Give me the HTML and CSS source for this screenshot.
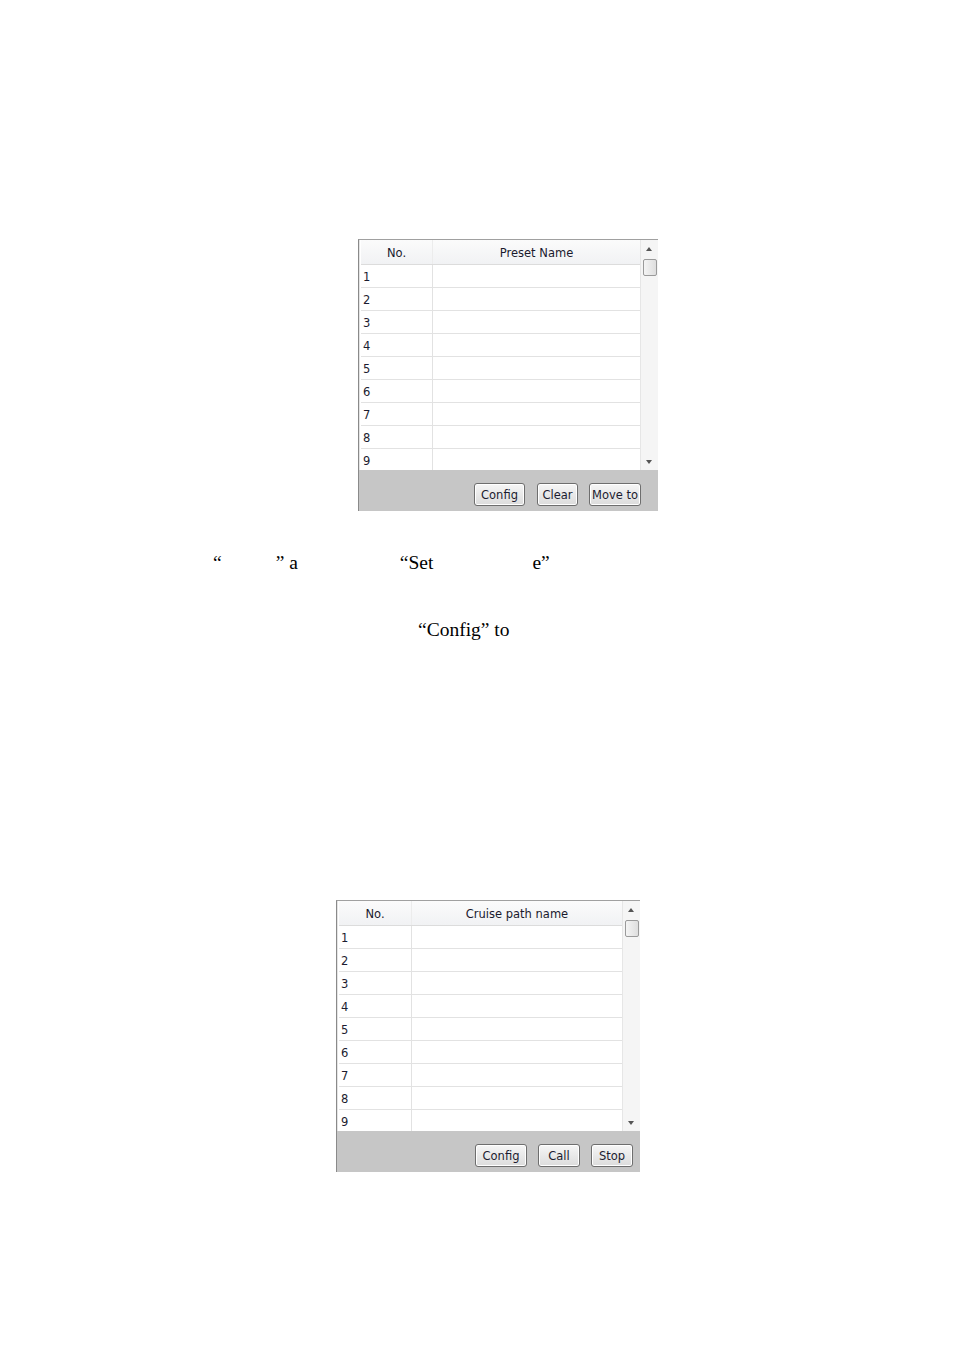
FILE: index.html
```html
<!DOCTYPE html>
<html>
<head>
<meta charset="utf-8">
<link rel="stylesheet" href="styles.css">
</head>
<body>
<div class="page">
  <div class="panel panel-a">
    <div class="list">
      <div class="table">
        <div class="row head"><div class="c1">No.</div><div class="c2">Preset Name</div></div>
        <div class="row"><div class="c1">1</div><div class="c2"></div></div>
        <div class="row"><div class="c1">2</div><div class="c2"></div></div>
        <div class="row"><div class="c1">3</div><div class="c2"></div></div>
        <div class="row"><div class="c1">4</div><div class="c2"></div></div>
        <div class="row"><div class="c1">5</div><div class="c2"></div></div>
        <div class="row"><div class="c1">6</div><div class="c2"></div></div>
        <div class="row"><div class="c1">7</div><div class="c2"></div></div>
        <div class="row"><div class="c1">8</div><div class="c2"></div></div>
        <div class="row last"><div class="c1">9</div><div class="c2"></div></div>
      </div>
      <div class="scroll">
        <div class="arrow up"></div>
        <div class="thumb"></div>
        <div class="track"></div>
        <div class="arrow down"></div>
      </div>
    </div>
    <div class="bar">
      <button class="btn b-config">Config</button>
      <button class="btn b-clear">Clear</button>
      <button class="btn b-move">Move to</button>
    </div>
  </div>

  <p class="line line1"><span class="w1">“</span><span class="w2">” a</span><span class="w3">“Set</span><span class="w4">e”</span></p>
  <p class="line line2"><span class="w5">“Config” to</span></p>

  <div class="panel panel-b">
    <div class="list">
      <div class="table">
        <div class="row head"><div class="c1">No.</div><div class="c2">Cruise path name</div></div>
        <div class="row"><div class="c1">1</div><div class="c2"></div></div>
        <div class="row"><div class="c1">2</div><div class="c2"></div></div>
        <div class="row"><div class="c1">3</div><div class="c2"></div></div>
        <div class="row"><div class="c1">4</div><div class="c2"></div></div>
        <div class="row"><div class="c1">5</div><div class="c2"></div></div>
        <div class="row"><div class="c1">6</div><div class="c2"></div></div>
        <div class="row"><div class="c1">7</div><div class="c2"></div></div>
        <div class="row"><div class="c1">8</div><div class="c2"></div></div>
        <div class="row last"><div class="c1">9</div><div class="c2"></div></div>
      </div>
      <div class="scroll">
        <div class="arrow up"></div>
        <div class="thumb"></div>
        <div class="track"></div>
        <div class="arrow down"></div>
      </div>
    </div>
    <div class="bar">
      <button class="btn b-config2">Config</button>
      <button class="btn b-call">Call</button>
      <button class="btn b-stop">Stop</button>
    </div>
  </div>
</div>
</body>
</html>
```

FILE: styles.css
```css
html, body {
  margin: 0;
  padding: 0;
  background: #ffffff;
}
.page {
  width: 954px;
  height: 1348px;
  padding-top: 239px;
  box-sizing: border-box;
  overflow: hidden;
}
.panel {
  display: flex;
  flex-direction: column;
  height: 272px;
  border-left: 1px solid #8a8a8a;
  border-top: 1px solid #a0a0a0;
  background: #ffffff;
  box-sizing: border-box;
  font-family: "DejaVu Sans", Verdana, sans-serif;
  font-size: 11.5px;
  color: #1c1c30;
}
.panel-a {
  margin-left: 358px;
  width: 300px;
}
.panel-b {
  margin-left: 336px;
  width: 304px;
  margin-top: 260px;
}
.list {
  display: flex;
  height: 230px;
  padding-left: 2px;
  box-shadow: inset 1px 0 0 #e4e4e4;
}
.table {
  flex: 1;
  display: flex;
  flex-direction: column;
  overflow: hidden;
  border-right: 1px solid #e6e6e6;
}
.row {
  display: flex;
  height: 23px;
  flex: none;
  border-bottom: 1px solid #e2e2e2;
  box-sizing: border-box;
}
.row.last {
  border-bottom: 0;
  height: 22px;
}
.row.head {
  height: 25px;
  background: linear-gradient(#fbfbfb, #f1f2f4);
  border-bottom: 1px solid #dcdcdc;
}
.row .c1 {
  width: 72px;
  flex: none;
  box-sizing: border-box;
  border-right: 1px solid #e2e2e2;
  padding-left: 2px;
  line-height: 22px;
  padding-top: 1px;
}
.panel-b .row .c1 {
  width: 73px;
}
.row .c2 {
  flex: 1;
}
.row.head .c1,
.row.head .c2 {
  text-align: center;
  line-height: 27px;
  padding-left: 0;
  padding-top: 0;
  color: #1a1a2e;
}
.row.head .c1 {
  border-right: 1px solid #ececec;
}
.scroll {
  width: 17px;
  flex: none;
  display: flex;
  flex-direction: column;
  background: #f5f5f5;
}
.arrow {
  height: 17px;
  flex: none;
  position: relative;
}
.arrow.up::after,
.arrow.down::after {
  content: "";
  position: absolute;
  left: 5px;
  width: 0;
  height: 0;
  border-left: 3px solid transparent;
  border-right: 3px solid transparent;
}
.arrow.up::after {
  top: 7px;
  border-bottom: 4px solid #555;
}
.arrow.down::after {
  top: 7px;
  border-top: 4px solid #555;
}
.thumb {
  height: 17px;
  flex: none;
  margin: 2px 1px 0 2px;
  border: 1px solid #9a9a9a;
  border-radius: 2px;
  background: linear-gradient(90deg, #f4f4f4, #dedede);
  box-sizing: border-box;
}
.track {
  flex: 1;
}
.bar {
  flex: 1;
  display: flex;
  align-items: flex-start;
  justify-content: flex-end;
  background: #c6c6c6;
  padding-top: 13px;
  box-sizing: border-box;
}
.btn {
  height: 23px;
  padding: 0;
  margin: 0;
  border: 1px solid #6e6e6e;
  border-radius: 3px;
  background: linear-gradient(#f6f6f6, #dcdcdc);
  font-family: "DejaVu Sans", Verdana, sans-serif;
  font-size: 11.5px;
  color: #1c1c30;
  box-shadow: inset 0 0 0 1px #ffffff;
}
.b-config { width: 51px; }
.b-clear { width: 41px; margin-left: 12px; }
.b-move { width: 52px; margin-left: 11px; margin-right: 17px; }
.b-config2 { width: 52px; }
.b-call { width: 42px; margin-left: 11px; }
.b-stop { width: 42px; margin-left: 11px; margin-right: 7px; }

.line {
  margin: 0;
  font-family: "Liberation Serif", "Times New Roman", serif;
  font-size: 19.5px;
  color: #000;
  height: 20px;
  line-height: 20px;
  white-space: pre;
}
.line1 {
  margin-top: 42px;
  padding-left: 213px;
}
.line2 {
  margin-top: 47px;
  padding-left: 418px;
}
.w2 { margin-left: 54px; }
.w3 { margin-left: 102px; }
.w4 { margin-left: 99px; }
```
